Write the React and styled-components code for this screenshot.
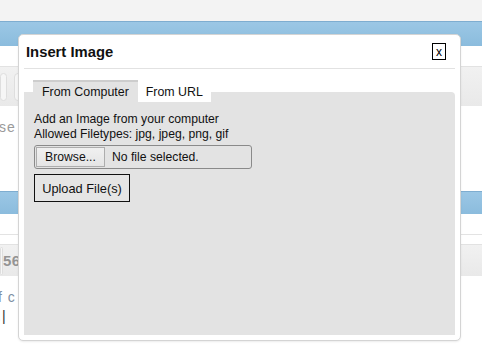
import React from "react";
import styled, { createGlobalStyle } from "styled-components";

const Global = createGlobalStyle`
  html, body { margin: 0; padding: 0; background: #fff; }
  body { font-family: "Liberation Sans", Arial, sans-serif; }
`;

const Page = styled.div`
  position: relative;
  width: 482px;
  height: 361px;
  overflow: hidden;
  background: #fff;
  display: flex;
  flex-direction: column;
`;

const TopStrip = styled.div`
  height: 21px;
  background: #f3f3f3;
  flex: none;
`;

const BlueBar = styled.div`
  height: ${(p) => p.$h}px;
  margin-top: ${(p) => p.$mt || 0}px;
  flex: none;
  background: linear-gradient(#9bc7e5, #8bbcdd);
  border-top: 1px solid #7eadd0;
  box-sizing: border-box;
`;

const Toolbar = styled.div`
  height: ${(p) => p.$h}px;
  margin-top: ${(p) => p.$mt}px;
  flex: none;
  box-sizing: border-box;
  border-top: 1px solid #e2e2e2;
  background: linear-gradient(#f1f1f1, #e9e9e9);
  display: flex;
  align-items: center;
  gap: 7px;
`;

const ToolButton = styled.div`
  width: ${(p) => p.$w}px;
  height: 28px;
  border-radius: 4px;
  border: 1px solid #dedede;
  background: #f6f6f6;
  box-sizing: border-box;
  flex: none;
`;

const ToolLabel = styled.div`
  margin-left: ${(p) => p.$ml}px;
  color: #949494;
  font-weight: bold;
  font-size: 15px;
  letter-spacing: 0.5px;
  white-space: nowrap;
`;

const BgText = styled.div`
  font-size: 14px;
  color: ${(p) => p.$c || "#9a9a9a"};
  line-height: 18px;
  margin-top: ${(p) => p.$mt || 0}px;
  margin-left: ${(p) => p.$ml || 0}px;
  letter-spacing: 1px;
  white-space: nowrap;
  flex: none;
`;

const Caret = styled.span`
  color: #333;
  font-weight: normal;
`;

const Rule = styled.div`
  height: 1px;
  background: #e3e3e3;
  margin-top: ${(p) => p.$mt}px;
  flex: none;
`;

const Dialog = styled.div`
  position: absolute;
  left: 18px;
  top: 34px;
  width: 443px;
  height: 307px;
  box-sizing: border-box;
  background: #fff;
  border: 1px solid #d4d4d4;
  border-radius: 5px;
  box-shadow: 0 1px 2px rgba(0, 0, 0, 0.08);
  display: flex;
  flex-direction: column;
  padding: 0 5px 5px 5px;
  color: #111;
`;

const Header = styled.div`
  height: 33px;
  display: flex;
  align-items: center;
  justify-content: space-between;
  border-bottom: 1px solid #e2e2e2;
  padding: 0 9px 0 2px;
  flex: none;
`;

const Title = styled.h1`
  margin: 0;
  font-size: 14.8px;
  font-weight: bold;
  color: #111;
`;

const CloseButton = styled.button`
  width: 14px;
  height: 17px;
  padding: 0;
  margin: 0;
  border: 1px solid #000;
  background: #fff;
  font-family: "Liberation Sans", Arial, sans-serif;
  font-size: 12px;
  line-height: 14px;
  color: #000;
  display: flex;
  align-items: center;
  justify-content: center;
`;

const Tabs = styled.div`
  margin-top: 11px;
  height: 22px;
  margin-bottom: -10px;
  padding-left: 9px;
  display: flex;
  position: relative;
  z-index: 1;
  flex: none;
`;

const Tab = styled.div`
  height: 22px;
  box-sizing: border-box;
  padding: 0 ${(p) => (p.$active ? 9 : 8)}px;
  font-size: 12.4px;
  display: flex;
  align-items: center;
  background: ${(p) => (p.$active ? "#e3e3e3" : "#fff")};
  border-top: 2px solid ${(p) => (p.$active ? "#cdcdcd" : "#fff")};
  color: #111;
`;

const Panel = styled.div`
  flex: 1;
  background: #e3e3e3;
  border-radius: 0 4px 0 0;
  padding: 20px 10px 10px 10px;
  font-size: 12.2px;
  line-height: 15px;
`;

const Line = styled.div``;

const FileField = styled.label`
  margin-top: 3px;
  width: 218px;
  height: 24px;
  box-sizing: border-box;
  border: 1px solid #8a8a8a;
  border-radius: 3px;
  padding: 1px;
  display: flex;
  align-items: center;
  gap: 7px;
`;

const BrowseButton = styled.span`
  width: 69px;
  height: 20px;
  box-sizing: border-box;
  border: 1px solid #adadad;
  background: linear-gradient(#f0f0f0, #e5e5e5);
  display: flex;
  align-items: center;
  justify-content: center;
`;

const UploadButton = styled.button`
  margin-top: 5px;
  width: 96px;
  height: 28px;
  box-sizing: border-box;
  border: 1px solid #111;
  background: #e5e5e5;
  font-family: "Liberation Sans", Arial, sans-serif;
  font-size: 12.8px;
  color: #111;
  padding: 0;
  display: block;
`;

export default function App() {
  return (
    <>
      <Global />
      <Page>
        <TopStrip />
        <BlueBar $h={25} />
        <Toolbar $h={40} $mt={20}>
          <ToolButton $w={7} />
          <ToolButton $w={40} />
        </Toolbar>
        <BgText $mt={12} $ml={-1}>se i</BgText>
        <BlueBar $h={23} $mt={55} />
        <Rule $mt={20} />
        <Toolbar $h={32} $mt={9}>
          <ToolButton $w={3} />
          <ToolLabel $ml={-7}>56</ToolLabel>
        </Toolbar>
        <BgText $mt={12} $ml={-2} $c="#7d8fa3">f c</BgText>
        <BgText $mt={1} $ml={-3} $c="#7d8fa3">
          .<Caret>|</Caret>
        </BgText>
        <Dialog>
          <Header>
            <Title>Insert Image</Title>
            <CloseButton>x</CloseButton>
          </Header>
          <Tabs>
            <Tab $active>From Computer</Tab>
            <Tab>From URL</Tab>
          </Tabs>
          <Panel>
            <Line>Add an Image from your computer</Line>
            <Line>Allowed Filetypes: jpg, jpeg, png, gif</Line>
            <FileField>
              <BrowseButton>Browse...</BrowseButton>
              <span>No file selected.</span>
            </FileField>
            <UploadButton>Upload File(s)</UploadButton>
          </Panel>
        </Dialog>
      </Page>
    </>
  );
}
